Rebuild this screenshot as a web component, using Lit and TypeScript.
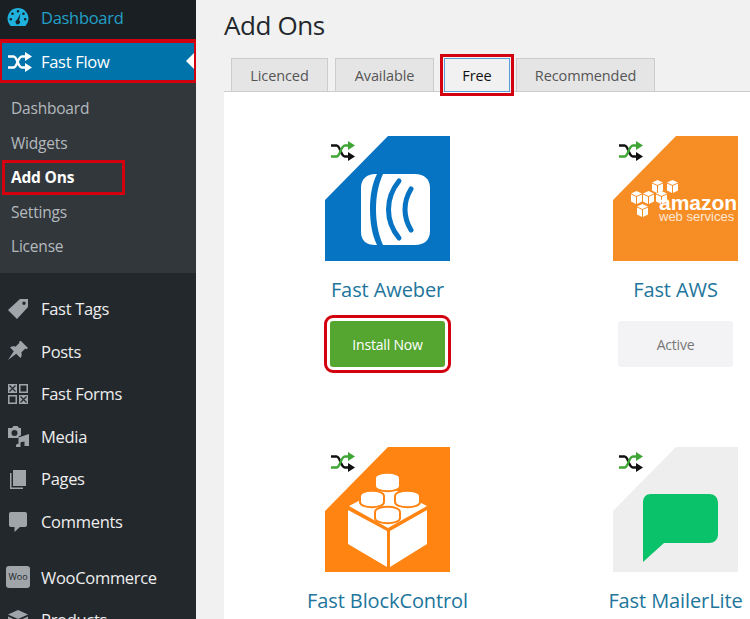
import { LitElement, html, css, svg } from 'lit';
import { customElement } from 'lit/decorators.js';

const shuffle = (arrow: string) => svg`
  <path d="M1 4.5h5.5c4 0 4 11 8.5 11h4" fill="none" stroke=${arrow === 'white' ? '#fff' : '#111'} stroke-width="2.4"/>
  <path d="M1 15.5h5.5c4 0 4-11 8.5-11h4" fill="none" stroke=${arrow === 'white' ? '#fff' : '#3fa535'} stroke-width="2.4"/>
  <path d="M18 0l7 4.5-7 4.5z" fill=${arrow === 'white' ? '#fff' : '#3fa535'}/>
  <path d="M18 11l7 4.5-7 4.5z" fill=${arrow === 'white' ? '#fff' : '#111'}/>`;

const icons: Record<string, unknown> = {
  gauge: svg`<path fill-rule="evenodd" d="M11 2a10.5 10.5 0 0 0-8 17.2c.6.7 1.3.8 2 .8h12c.7 0 1.4-.1 2-.8A10.500 10.500 0 0 0 11 2zM11 4a1.300 1.300 0 1 1 0 2.600A1.300 1.300 0 0 1 11 4zM5.500 6.500a1.300 1.300 0 1 1 0 2.600 1.300 1.300 0 0 1 0-2.600zM16.500 6.500a1.300 1.300 0 1 1 0 2.600 1.300 1.300 0 0 1 0-2.600zM3.800 12a1.300 1.300 0 1 1 0 2.600 1.300 1.300 0 0 1 0-2.600zM18.200 12a1.300 1.300 0 1 1 0 2.600 1.300 1.300 0 0 1 0-2.600zM13.500 7.500l-1.300 7a2.200 2.200 0 1 1-2.200-.4z"/>`,
  tag: svg`<path fill-rule="evenodd" d="M13 1h8v8L10 21 1 12zM17 3.500a1.700 1.700 0 1 0 0 3.400 1.700 1.700 0 0 0 0-3.400z"/>`,
  pin: svg`<path d="M14 1l7 7-1.500 1.200-1.200-.6-4 4c.8 2 .5 3.800-.8 5.400l-4.300-4.300L1 20l5.800-8.800-3.700-3.700c1.600-1.300 3.400-1.600 5.400-.8l4-4-.6-1.200z"/>`,
  forms: svg`<path fill-rule="evenodd" d="M1 1h9v9H1zM12 1h9v9h-9zM13.500 2.500v6h6v-6zM1 12h9v9H1zM2.500 13.500v6h6v-6zM12 12h9v9h-9z"/>
    <path d="M2.500 2.500l6 6M8.500 2.500l-6 6M13.500 13.500l6 6M19.500 13.500l-6 6" stroke="#23282d" stroke-width="1.200"/>`,
  media: svg`<path fill-rule="evenodd" d="M1 3h4l1.500-2h4L12 3h2v7.500c-1.800 0-2.600 1-2.600 2.500H1zM7.500 5a3 3 0 1 0 0 6 3 3 0 0 0 0-6z"/>
    <path d="M22 9v12h-4.500v-4.500l-4 .8V21a2.300 2.300 0 1 1-2-2.200v-6.300z"/>`,
  pages: svg`<path d="M6 2h13v16H6z"/><path d="M3 5h1.500v14.500H16V21H3z"/>`,
  comment: svg`<path d="M4 2h14c1.200 0 2 .8 2 2v11c0 1.200-.8 2-2 2h-5l-5.500 5v-5H4c-1.200 0-2-.8-2-2V4c0-1.200.8-2 2-2z"/>`,
  box: svg`<path d="M11 1l10 4.500L11 10 1 5.500z"/><path d="M1 7.500l9.500 4.300V22L1 17.500zM21 7.500l-9.500 4.300V22l9.500-4.500z"/>`,
};

const cube = (x: number, y: number) => svg`
  <path transform="translate(${x} ${y})" fill="#fff" d="M0 2.500L5.500 0 11 2.500 5.500 5zM0 3.500l5 2.300V13L0 10.500zM11 3.500L6 5.800V13l5-2.500z"/>`;

const logos: Record<string, unknown> = {
  aweber: html`<svg viewBox="0 0 125 125" class="logo">
    <path fill="#0673c3" d="M63 0h62v125H0V64z"/>
    <path fill="#fff" d="M50 38c-8 0-14 5-14 14v44c0 9 6 13 14 13h2c-5-10-7-23-7-36s2-25 7-35z"/>
    <path fill="#fff" d="M58 38c-5 11-7 23-7 35s2 25 7 36h32c9 0 15-5 15-14V52c0-9-6-14-15-14z"/>
    <path fill="none" stroke="#0673c3" stroke-width="5" stroke-linecap="round" d="M74 45c-14 17-14 40 0 57M86 53c-8 13-8 28 0 41"/>
  </svg>`,
  aws: html`<svg viewBox="0 0 125 125" class="logo">
    <path fill="#f68d25" d="M63 0h62v125H0V64z"/>
    ${cube(39, 44)}${cube(54, 44)}${cube(18, 55)}${cube(30, 55)}${cube(43, 55)}${cube(24, 68)}
    <text x="46" y="74" class="aws-big">amazon</text>
    <text x="46" y="85" class="aws-small">web services</text>
  </svg>`,
  block: html`<svg viewBox="0 0 125 125" class="logo">
    <path fill="#ff8412" d="M63 0h62v125H0V64z"/>
    <path fill="#fff" d="M23 63l39 21v36L23 97zM102 63l-37 21v36l37-23zM24 59l38-20 40 20-39 22z"/>
    <g fill="#fff" stroke="#ff8412" stroke-width="2">
      <path d="M35 55v-6c0-7 24-7 24 0v6c0 7-24 7-24 0z"/>
      <path d="M50 39v-8c0-7 25-7 25 0v8c0 7-25 7-25 0z"/>
      <path d="M70 55v-6c0-7 25-7 25 0v6c0 7-25 7-25 0z"/>
      <path d="M50 71v-6c0-7 25-7 25 0v6c0 7-25 7-25 0z"/>
    </g>
  </svg>`,
  mailer: html`<svg viewBox="0 0 125 125" class="logo">
    <path fill="#eeeeee" d="M63 0h62v125H0V64z"/>
    <path fill="#09c269" d="M38 47h58c5 0 9 3 9 9v31c0 6-4 9-9 9H51l-21 19V56c0-6 3-9 8-9z"/>
  </svg>`,
};

@customElement('app-root')
export class AppRoot extends LitElement {
  static styles = css`
    :host {
      display: flex;
      width: 750px;
      height: 619px;
      overflow: hidden;
      background: #f1f1f1;
      font-family: 'Open Sans', 'Noto Sans', sans-serif;
    }

    .sidebar {
      flex: 0 0 196px;
      height: 619px;
      background: #23282d;
      overflow: hidden;
    }

    .top-row {
      display: flex;
      align-items: center;
      height: 39px;
      padding-bottom: 5px;
      box-sizing: border-box;
      background: #1a1f24;
      color: #22a0c8;
      font-size: 16.5px;
      letter-spacing: -0.3px;
    }

    .item-icon {
      flex: 0 0 41px;
      display: flex;
      justify-content: center;
      padding-right: 5px;
      box-sizing: border-box;
    }

    .item-icon svg {
      width: 22px;
      height: 22px;
      fill: #a0a5aa;
    }

    .top-row .item-icon svg {
      fill: #1fb2df;
    }

    .current {
      position: relative;
      display: flex;
      align-items: center;
      height: 44px;
      box-sizing: border-box;
      border: 3px solid #d3000f;
      border-top-width: 4px;
      border-right-width: 2px;
      border-left-width: 2px;
      background: #0073aa;
      color: #fff;
      font-size: 16.5px;
      letter-spacing: -0.3px;
    }

    .current .item-icon {
      flex-basis: 39px;
    }

    .current .item-icon svg {
      width: 25px;
      height: 20px;
    }

    .current::after {
      content: '';
      position: absolute;
      right: 0;
      top: 10px;
      border: 8px solid transparent;
      border-left: 0;
      border-right-color: #fff;
    }

    .submenu {
      background: #32373c;
      padding: 8px 0 9px;
      color: #b4b9be;
      font-size: 15.500px;
      letter-spacing: -0.2px;
    }

    .sub-item {
      height: 34.500px;
      line-height: 34.500px;
      padding-left: 11px;
    }

    .sub-item.selected {
      width: 123px;
      margin-left: 2px;
      padding-left: 6px;
      box-sizing: border-box;
      border: 3px solid #d3000f;
      line-height: 28px;
      color: #fff;
      font-weight: 700;
    }

    .menu {
      padding-top: 15px;
    }

    .menu-item {
      display: flex;
      align-items: center;
      height: 42.500px;
      color: #eeeeee;
      font-size: 16.500px;
      letter-spacing: -0.3px;
    }

    .menu-item.spaced {
      margin-top: 13.500px;
    }

    .woo {
      display: block;
      width: 24px;
      height: 22px;
      border-radius: 3px;
      background: #a0a5aa;
      color: #23282d;
      font-size: 9px;
      line-height: 21px;
      text-align: center;
      letter-spacing: 0;
    }

    .main {
      flex: 1;
      min-width: 0;
      padding-left: 28px;
    }

    h1 {
      margin: 0;
      height: 58px;
      font-size: 26px;
      font-weight: 400;
      line-height: 50px;
      letter-spacing: -0.4px;
      color: #23282d;
    }

    .tabs {
      display: flex;
      height: 34px;
      padding-left: 7px;
      box-sizing: border-box;
      border-bottom: 1px solid #ccc;
    }

    .tab {
      display: flex;
      align-items: center;
      justify-content: center;
      height: 34px;
      box-sizing: border-box;
      margin-right: 7px;
      border: 1px solid #ccc;
      background: #e5e5e5;
      color: #555;
      font-size: 14.500px;
      font-weight: 500;
      letter-spacing: -0.1px;
    }

    .tab.licenced { width: 97px; }
    .tab.available { width: 99px; margin-right: 10px; }
    .tab.free {
      width: 66px;
      margin-right: 6px;
      background: #f1f1f1;
      border-color: #5b9dd9;
      color: #111;
      outline: 3px solid #d3000f;
      outline-offset: 1px;
    }
    .tab.recommended { width: 139px; }

    .panel {
      display: grid;
      grid-template-columns: 288px 288px;
      grid-auto-rows: 311px;
      padding: 44px 0 0 19.500px;
      background: #fff;
      height: 527px;
      box-sizing: border-box;
    }

    .card {
      display: flex;
      flex-direction: column;
      align-items: center;
    }

    .art {
      position: relative;
      width: 125px;
      height: 125px;
    }

    .logo {
      display: block;
      width: 125px;
      height: 125px;
    }

    .badge {
      position: absolute;
      left: 5px;
      top: 5px;
      width: 25px;
      height: 20px;
    }

    .aws-big {
      font: 700 21px 'Liberation Sans', sans-serif;
      fill: #fff;
    }

    .aws-small {
      font: 400 13px 'Liberation Sans', sans-serif;
      fill: #fff;
      opacity: 0.8;
    }

    .name {
      margin-top: 12px;
      height: 33px;
      line-height: 33px;
      font-size: 20px;
      letter-spacing: -0.1px;
      color: #21759b;
      white-space: nowrap;
    }

    .action {
      display: flex;
      align-items: center;
      justify-content: center;
      width: 115px;
      height: 46px;
      margin-top: 15px;
      border-radius: 3px;
      font-size: 14px;
      letter-spacing: -0.2px;
    }

    .action.install {
      background: #55a630;
      color: #fff;
      outline: 3px solid #d3000f;
      outline-offset: 3px;
    }

    .action.active {
      background: #f3f3f5;
      color: #777;
    }
  `;

  renderMenuItem(label: string, icon: unknown, cls = '') {
    return html`<div class="menu-item ${cls}">
      <span class="item-icon">${icon}</span>${label}
    </div>`;
  }

  renderIcon(name: string) {
    return html`<svg viewBox="0 0 22 22">${icons[name]}</svg>`;
  }

  renderCard(name: string, logo: string, action?: string) {
    return html`<div class="card">
      <div class="art">
        ${logos[logo]}
        <svg class="badge" viewBox="0 0 25 20">${shuffle('color')}</svg>
      </div>
      <div class="name">${name}</div>
      ${action === 'install'
        ? html`<div class="action install">Install Now</div>`
        : action === 'active'
          ? html`<div class="action active">Active</div>`
          : ''}
    </div>`;
  }

  render() {
    return html`
      <nav class="sidebar">
        <div class="top-row">
          <span class="item-icon">${this.renderIcon('gauge')}</span>Dashboard
        </div>
        <div class="current">
          <span class="item-icon"><svg viewBox="0 0 25 20">${shuffle('white')}</svg></span>Fast Flow
        </div>
        <div class="submenu">
          <div class="sub-item">Dashboard</div>
          <div class="sub-item">Widgets</div>
          <div class="sub-item selected">Add Ons</div>
          <div class="sub-item">Settings</div>
          <div class="sub-item">License</div>
        </div>
        <div class="menu">
          ${this.renderMenuItem('Fast Tags', this.renderIcon('tag'))}
          ${this.renderMenuItem('Posts', this.renderIcon('pin'))}
          ${this.renderMenuItem('Fast Forms', this.renderIcon('forms'))}
          ${this.renderMenuItem('Media', this.renderIcon('media'))}
          ${this.renderMenuItem('Pages', this.renderIcon('pages'))}
          ${this.renderMenuItem('Comments', this.renderIcon('comment'))}
          ${this.renderMenuItem('WooCommerce', html`<span class="woo">Woo</span>`, 'spaced')}
          ${this.renderMenuItem('Products', this.renderIcon('box'))}
        </div>
      </nav>
      <main class="main">
        <h1>Add Ons</h1>
        <div class="tabs">
          <div class="tab licenced">Licenced</div>
          <div class="tab available">Available</div>
          <div class="tab free">Free</div>
          <div class="tab recommended">Recommended</div>
        </div>
        <div class="panel">
          ${this.renderCard('Fast Aweber', 'aweber', 'install')}
          ${this.renderCard('Fast AWS', 'aws', 'active')}
          ${this.renderCard('Fast BlockControl', 'block')}
          ${this.renderCard('Fast MailerLite', 'mailer')}
        </div>
      </main>
    `;
  }
}
